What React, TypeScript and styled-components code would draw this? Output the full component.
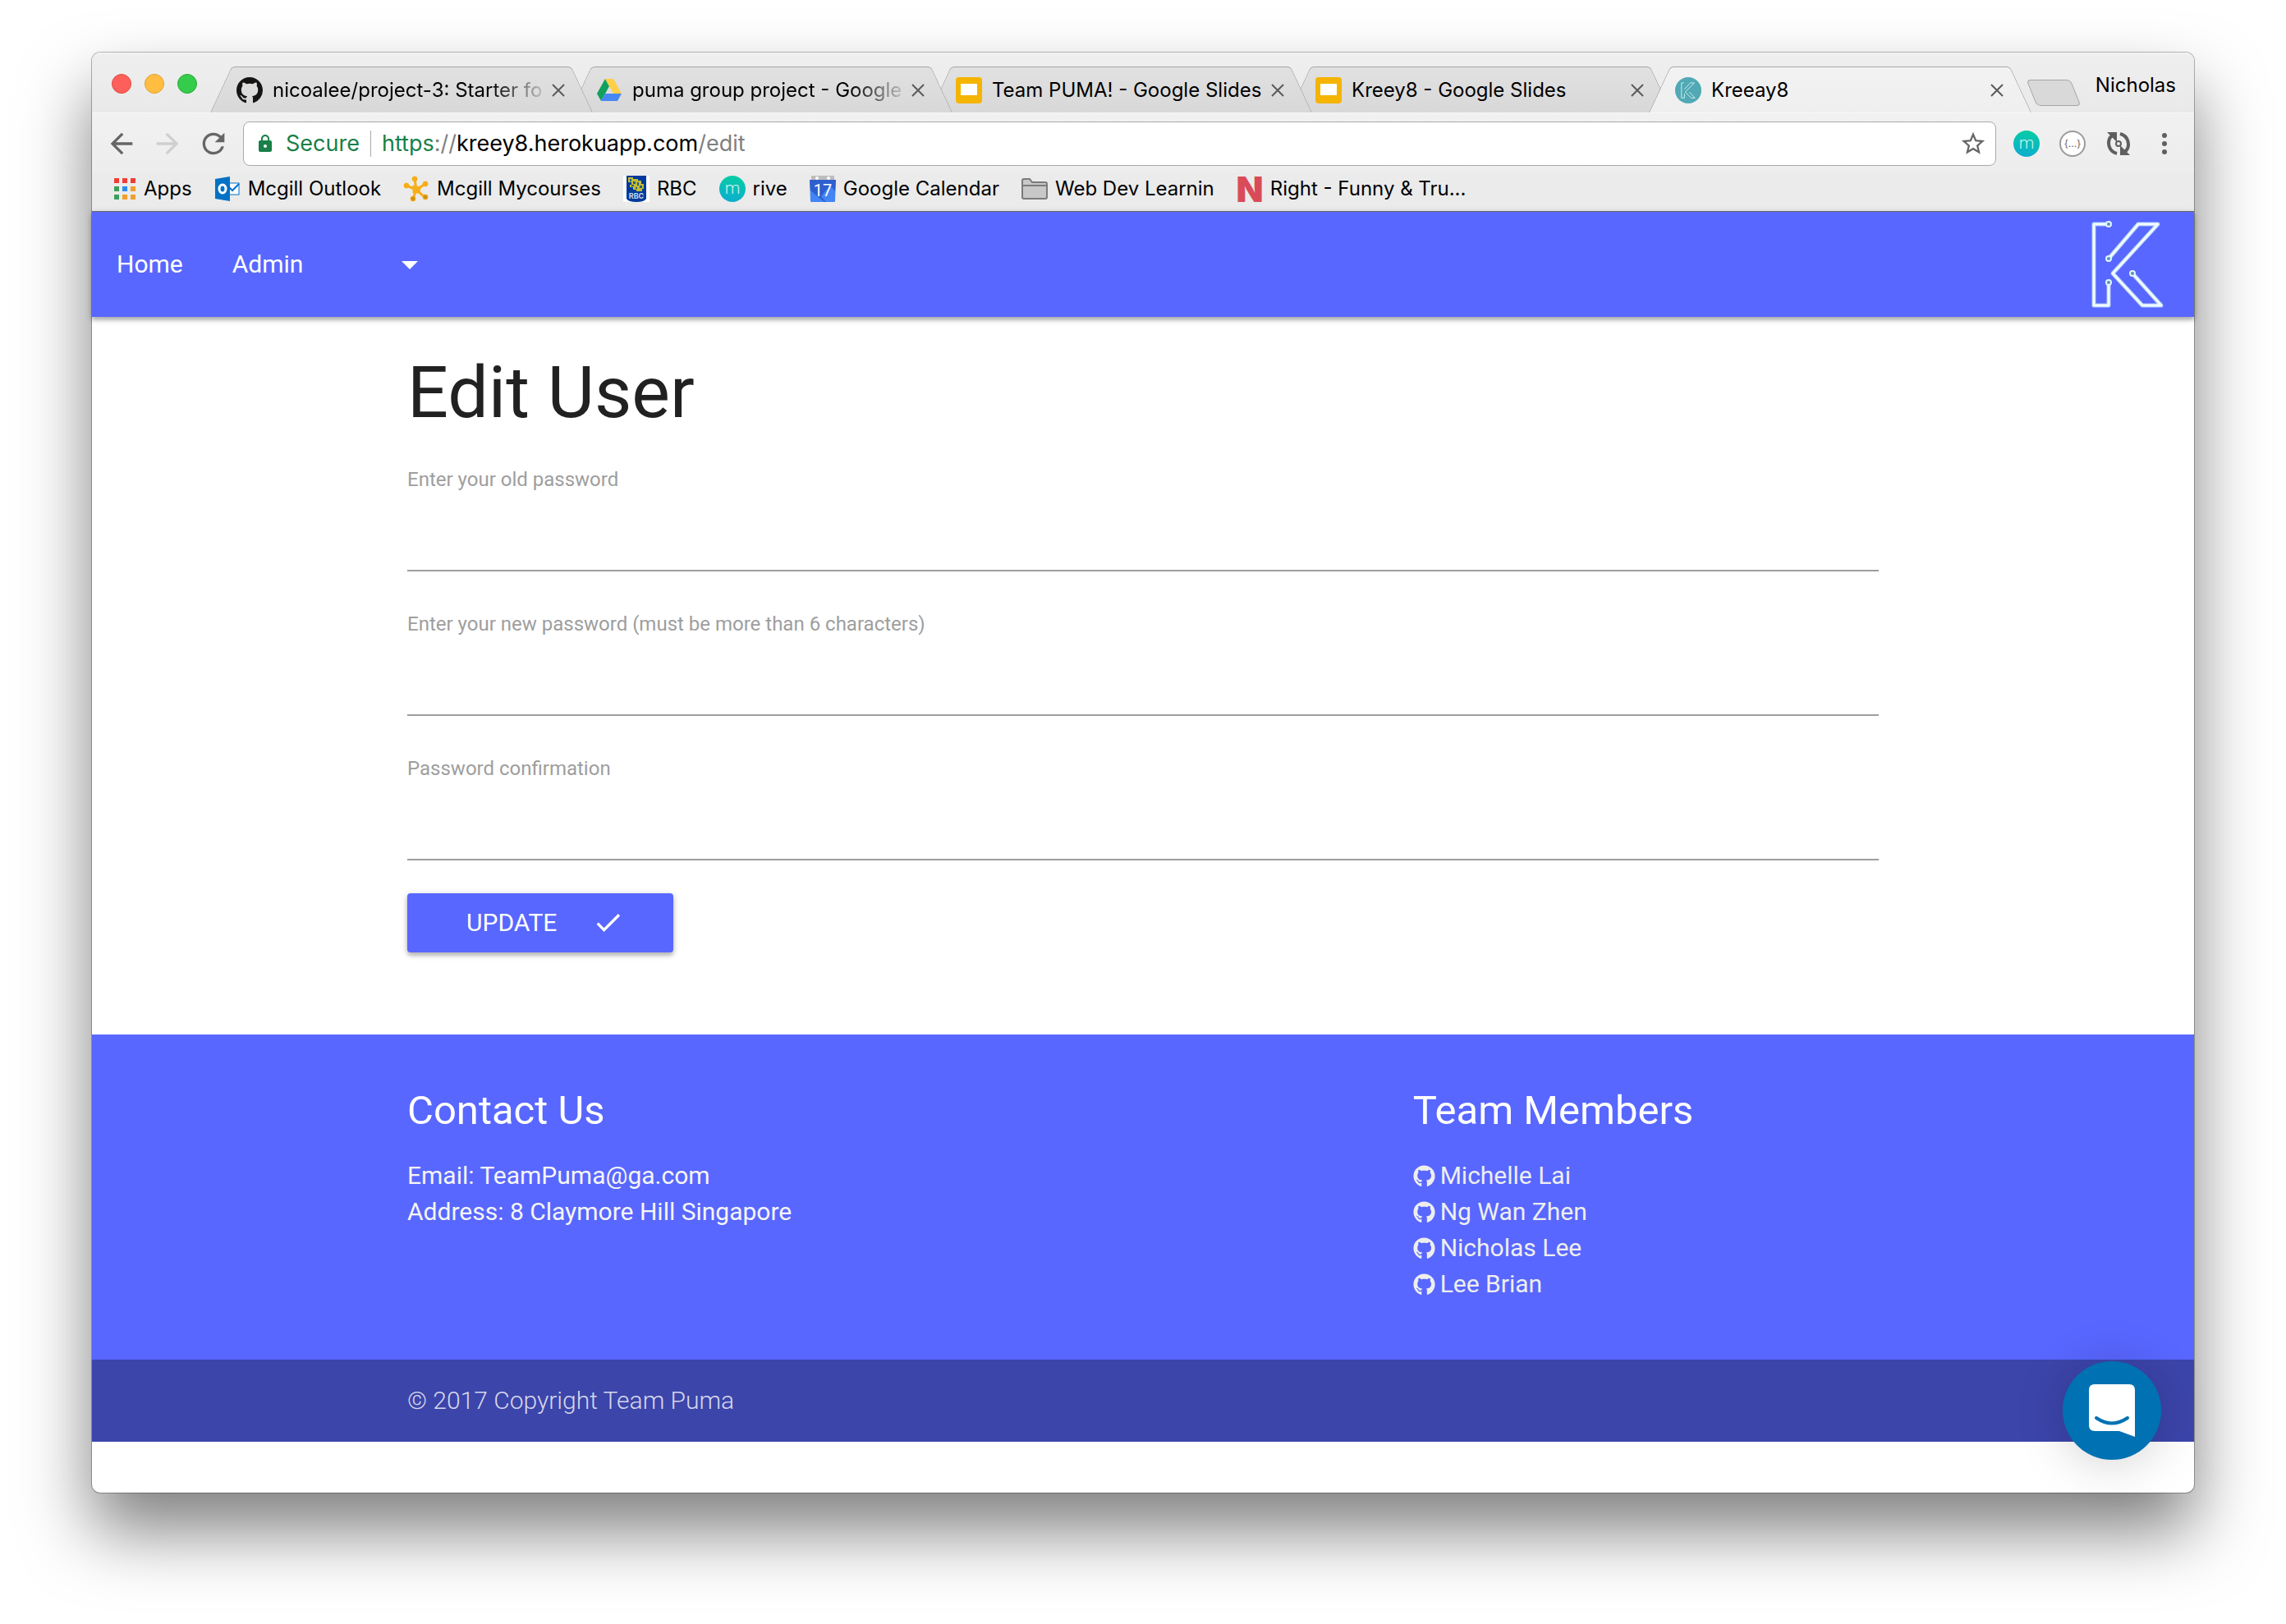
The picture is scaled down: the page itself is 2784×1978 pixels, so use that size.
import React from "react";
import styled, { createGlobalStyle, css } from "styled-components";
import { FaGithub } from "react-icons/fa";
import { MdArrowBack, MdArrowForward, MdRefresh, MdStarBorder, MdLock, MdCheck } from "react-icons/md";

const uiFont = `Inter, "Noto Sans", sans-serif`;
const blue = "#5867ff";

const GlobalStyle = createGlobalStyle`
  *, *::before, *::after { box-sizing: border-box; }
  body { margin: 0; background: #fff; font-family: Roboto, sans-serif; }
  button { font: inherit; color: inherit; background: none; border: 0; padding: 0; cursor: pointer; }
  a { color: inherit; text-decoration: none; }
  svg { display: block; flex: none; }
`;

/* ---------- window ---------- */

const Desktop = styled.div`
  min-height: 100vh;
  padding: 64px 112px 160px;
  display: flex;
`;

const Window = styled.div`
  flex: 1;
  min-width: 0;
  display: flex;
  flex-direction: column;
  border-radius: 10px;
  background: #fff;
  box-shadow: 0 0 0 1px rgba(0, 0, 0, 0.28), 0 46px 84px rgba(0, 0, 0, 0.5);
`;

const Chrome = styled.header`
  font-family: ${uiFont};
  font-size: 24px;
  color: #000;
  border-radius: 10px 10px 0 0;
  border-bottom: 1px solid #6f6f6f;
  background: #ebebeb;
  overflow: hidden;
`;

/* ---------- tab strip ---------- */

const TabStrip = styled.div`
  display: flex;
  height: 73px;
  padding: 0 22px 0 24px;
  background: linear-gradient(#efefef, #e9e9e9);
  border-top: 1px solid #f8f8f8;
`;

const Lights = styled.div`
  display: flex;
  align-items: center;
  gap: 16px;
  width: 120px;
  height: 74px;
  flex: none;
`;

const Light = styled.button<{ $fill: string; $edge: string }>`
  width: 24px;
  height: 24px;
  border-radius: 50%;
  background: ${(p) => p.$fill};
  border: 1px solid ${(p) => p.$edge};
`;

const Tabs = styled.div`
  display: flex;
  flex: 0 1 2218px;
  min-width: 0;
  align-self: flex-end;
  isolation: isolate;
`;

const tabSide = css<{ $active?: boolean }>`
  content: "";
  position: absolute;
  top: 0;
  bottom: 0;
  z-index: -1;
  border-top: 1px solid #a6a6a6;
  background: ${(p) => (p.$active ? "linear-gradient(#f2f2f2, #efefef)" : "linear-gradient(#e1e1e1, #d8d8d8)")};
`;

const Tab = styled.div<{ $active?: boolean; $order: number }>`
  position: relative;
  isolation: isolate;
  z-index: ${(p) => p.$order};
  flex: 0 1 466px;
  min-width: 0;
  height: 56px;
  padding: 2px 34px 0 32px;
  display: flex;
  align-items: center;
  gap: 12px;
  & + & { margin-left: -28px; }
  &::before {
    ${tabSide}
    left: 13px;
    width: 50%;
    border-left: 1px solid #a6a6a6;
    border-top-left-radius: 5px;
    transform: skewX(-25deg);
  }
  &::after {
    ${tabSide}
    right: 13px;
    width: 50%;
    border-right: 1px solid #a6a6a6;
    border-top-right-radius: 5px;
    transform: skewX(25deg);
  }
`;

const TabTitle = styled.span<{ $fade?: boolean }>`
  flex: 1;
  min-width: 0;
  overflow: hidden;
  white-space: nowrap;
  line-height: 32px;
  ${(p) => p.$fade && "mask-image: linear-gradient(to right, #000 calc(100% - 64px), rgba(0,0,0,0.15));"}
`;

const NewTab = styled.button`
  width: 54px;
  height: 32px;
  margin: 32px 0 0;
  flex: none;
  background: #d9d9d9;
  border: 1px solid #a6a6a6;
  border-radius: 5px;
  transform: skewX(22deg);
`;

const Profile = styled.button`
  margin-left: auto;
  line-height: 32px;
  height: 78px;
`;

/* ---------- toolbar ---------- */

const Toolbar = styled.div`
  display: flex;
  align-items: center;
  height: 74px;
  padding: 0 20px 0 16px;
  background: linear-gradient(#f1f1f1, #ededed);
  border-top: 1px solid #f8f8f8;
`;

const ToolButton = styled.button<{ $faint?: boolean }>`
  display: flex;
  align-items: center;
  justify-content: center;
  width: 40px;
  height: 40px;
  margin-right: 16px;
  color: ${(p) => (p.$faint ? "#cfcfcf" : "#666")};
`;

const Omnibox = styled.div`
  flex: 1;
  min-width: 0;
  display: flex;
  align-items: center;
  height: 54px;
  padding: 0 10px 0 14px;
  background: #fff;
  border: 1px solid #a9a9a9;
  border-radius: 8px;
  font-size: 27px;
  line-height: 36px;
`;

const Secure = styled.span`
  display: flex;
  align-items: center;
  gap: 13px;
  padding-right: 13px;
  border-right: 1px solid #a9a9a9;
  line-height: 32px;
  color: #188048;
`;

const Url = styled.div`
  flex: 1;
  padding-left: 13px;
  color: #000;
`;

const Scheme = styled.span`
  color: #188048;
`;

const Dim = styled.span`
  color: #808080;
`;

const Extensions = styled.div`
  display: flex;
  align-items: center;
  gap: 24px;
  margin-left: 21px;
`;

/* ---------- bookmarks ---------- */

const Bookmarks = styled.nav`
  display: flex;
  align-items: center;
  gap: 27px;
  height: 46px;
  padding: 0 26px 8px;
`;

const Bookmark = styled.a`
  display: flex;
  align-items: center;
  gap: 9px;
  line-height: 32px;
  white-space: nowrap;
`;

/* ---------- page ---------- */

const Page = styled.div`
  position: relative;
  flex: 1;
  font-size: 30px;
`;

const NavBar = styled.nav`
  display: flex;
  align-items: center;
  height: 128px;
  padding: 0 30px 0 0;
  color: #fff;
  background: ${blue};
  box-shadow: 0 4px 4px rgba(0, 0, 0, 0.18), 0 2px 8px rgba(0, 0, 0, 0.24);
`;

const navItem = css`
  display: flex;
  align-items: center;
  padding: 0 30px 2px;
  height: 128px;
`;

const NavLink = styled.a`
  ${navItem}
`;

const NavMenu = styled.button`
  && {
    ${navItem}
    justify-content: space-between;
    width: 286px;
  }
`;

const Caret = styled.span`
  border: 10px solid transparent;
  border-top-color: #fff;
  border-bottom: 0;
  margin-top: 4px;
`;

const Brand = styled.a`
  margin-left: auto;
`;

const Container = styled.div`
  width: 70%;
  margin: 0 auto;
`;

const Title = styled.h3`
  margin: 44px 0 40px;
  font-size: 88px;
  line-height: 96px;
  font-weight: 400;
  color: #212121;
`;

const Field = styled.div`
  display: flex;
  flex-direction: column;
  margin-bottom: 46px;
`;

const FieldLabel = styled.label`
  font-size: 24px;
  line-height: 36px;
  color: #9e9e9e;
`;

const FieldInput = styled.input`
  width: 100%;
  height: 94px;
  padding: 0;
  border: 0;
  border-bottom: 2px solid #9e9e9e;
  outline: 0;
  background: transparent;
  font: 30px Roboto, sans-serif;
`;

const Update = styled.button`
  && {
    display: flex;
    align-items: center;
    justify-content: space-between;
    width: 324px;
    height: 72px;
    padding: 0 60px 2px 72px;
    margin: -6px 0 100px;
    color: #fff;
    background: ${blue};
    border-radius: 4px;
    box-shadow: 0 4px 4px rgba(0, 0, 0, 0.16), 0 2px 8px rgba(0, 0, 0, 0.22);
  }
`;

const Footer = styled.footer`
  color: #fff;
  background: ${blue};
`;

const FooterColumns = styled(Container)`
  display: grid;
  grid-template-columns: 2fr 1fr;
  column-gap: 90px;
  padding: 66px 0 70px;
`;

const FooterTitle = styled.h5`
  margin: 0 0 30px;
  font-size: 49px;
  line-height: 54px;
  font-weight: 400;
`;

const FooterText = styled.p`
  margin: 0;
  line-height: 44px;
  color: #f5f5f5;
`;

const Members = styled.ul`
  margin: 0;
  padding: 0;
  list-style: none;
`;

const Member = styled.a`
  display: flex;
  align-items: center;
  gap: 6px;
  line-height: 44px;
  color: #eee;
`;

const Copyright = styled.div`
  padding: 28px 0;
  line-height: 44px;
  font-weight: 300;
  color: rgba(255, 255, 255, 0.8);
  background: #3c45aa;
`;

const Messenger = styled.button`
  && {
    position: absolute;
    right: 40px;
    bottom: 40px;
    display: flex;
    align-items: center;
    justify-content: center;
    width: 120px;
    height: 120px;
    border-radius: 50%;
    background: #0071b2;
    box-shadow: 0 4px 60px rgba(0, 0, 0, 0.18);
  }
`;

/* ---------- drawings ---------- */

const GithubMark = () => (
  <svg width="32" height="32" viewBox="0 0 16 16" fill="#161514">
    <path d="M8 0C3.58 0 0 3.58 0 8c0 3.54 2.29 6.53 5.47 7.59.4.07.55-.17.55-.38 0-.19-.01-.82-.01-1.49-2.01.37-2.53-.49-2.69-.94-.09-.23-.48-.94-.82-1.13-.28-.15-.68-.52-.01-.53.63-.01 1.08.58 1.23.82.72 1.21 1.87.87 2.33.66.07-.52.28-.87.51-1.07-1.78-.2-3.64-.89-3.64-3.95 0-.87.31-1.59.82-2.15-.08-.2-.36-1.02.08-2.12 0 0 .67-.21 2.2.82.64-.18 1.32-.27 2-.27s1.36.09 2 .27c1.53-1.04 2.2-.82 2.2-.82.44 1.1.16 1.92.08 2.12.51.56.82 1.27.82 2.15 0 3.07-1.87 3.75-3.65 3.95.29.25.54.73.54 1.48 0 1.07-.01 1.93-.01 2.2 0 .21.15.46.55.38A8.01 8.01 0 0 0 16 8c0-4.42-3.58-8-8-8z" />
  </svg>
);

const DriveIcon = () => (
  <svg width="32" height="32" viewBox="0 0 32 32">
    <path d="M11 2 L1 20 L6 29 L16 11 Z" fill="#11a05e" />
    <path d="M11 2 H21 L31 20 H21 Z" fill="#ffcf48" />
    <path d="M11 20 H31 L26 29 H6 Z" fill="#4688f4" />
  </svg>
);

const SlidesIcon = () => (
  <svg width="32" height="32" viewBox="0 0 32 32">
    <rect width="32" height="32" rx="4" fill="#f5b400" />
    <rect x="6" y="8" width="20" height="14" fill="#fff" />
  </svg>
);

const circuit = "M19 5H4V104H22V76M22 47L58 5H82L27 65L63 104H86L51 65";
const nodes = [[22, 5], [22, 47], [22, 76], [51, 65]];

const KFavicon = () => (
  <svg width="32" height="32" viewBox="0 0 32 32">
    <circle cx="16" cy="16" r="16" fill="#50a9b4" />
    <g transform="translate(7 6) scale(0.2 0.186)" fill="none" stroke="#cfeef0" strokeWidth="5">
      <path d={circuit} />
    </g>
  </svg>
);

const KLogo = () => (
  <svg width="96" height="108" viewBox="0 0 96 108" fill="none">
    <path d={circuit} stroke="#a9c8ff" strokeWidth="5" strokeLinejoin="round" />
    <path d={circuit} stroke="#f2fbff" strokeWidth="3" strokeLinejoin="round" />
    {nodes.map(([x, y]) => (
      <circle key={`${x}-${y}`} cx={x} cy={y} r="3" fill="#4f95b8" stroke="#e4f5ff" strokeWidth="2" />
    ))}
  </svg>
);

const CloseIcon = () => (
  <svg width="16" height="16" viewBox="0 0 16 16" stroke="#5a5a5a" strokeWidth="2">
    <path d="M1 1L15 15M15 1L1 15" />
  </svg>
);

const AppsIcon = () => {
  const colors = ["#f23c36", "#f23c36", "#f23c36", "#3a9f5c", "#2a8cf5", "#f0a02a", "#3a9f5c", "#f0a02a", "#f0a02a"];
  return (
    <svg width="28" height="28" viewBox="0 0 28 28">
      {colors.map((c, i) => (
        <rect key={i} x={1 + (i % 3) * 10} y={1 + Math.floor(i / 3) * 10} width="6" height="6" fill={c} />
      ))}
    </svg>
  );
};

const OutlookIcon = () => (
  <svg width="32" height="32" viewBox="0 0 32 32">
    <rect x="17" y="9" width="13" height="14" fill="#fff" stroke="#0072c6" strokeWidth="1" />
    <path d="M17 13L22 18L30 10" fill="none" stroke="#0072c6" strokeWidth="2" />
    <path d="M1 4L19 1V31L1 28Z" fill="#0072c6" />
    <ellipse cx="10" cy="16" rx="4" ry="5" fill="none" stroke="#fff" strokeWidth="3" />
  </svg>
);

const CoursesIcon = () => (
  <svg width="32" height="32" viewBox="0 0 32 32" fill="#f8ae18" stroke="#f8ae18">
    <path d="M16 17L14 4M16 17L4 12M16 17L27 10M16 17L12 28M16 17L27 27" strokeWidth="3" />
    <path d="M12 12L21 14L20 21H12Z" />
    <circle cx="14" cy="4" r="3" />
    <circle cx="4" cy="12" r="3" />
    <circle cx="27" cy="10" r="3" />
    <circle cx="12" cy="28" r="3" fill="#d0930f" />
    <circle cx="27" cy="26" r="3" fill="#d0930f" />
  </svg>
);

const BankIcon = () => (
  <svg width="32" height="32" viewBox="0 0 32 32">
    <rect width="32" height="32" fill="#fff" />
    <path d="M4 0H28V28Q26 32 16 32Q6 32 4 28Z" fill="#003a9b" />
    <path d="M6 2h6v2h6v2h4v4h3v6h-2v3h-7v-2h-4v-3h-4v-3h2V8H6z" fill="#c2bd30" />
    <path d="M8 4h2v3H8zM12 7h3v3h-3zM17 8h2v4h-2zM10 11h3v2h-3zM20 12h3v3h-3zM15 14h2v2h-2z" fill="#2a5c84" />
    <text x="16" y="28" fontSize="9" fontWeight="700" textAnchor="middle" fill="#c9d6ec">RBC</text>
  </svg>
);

const MBadge = ({ id }: { id: string }) => (
  <svg width="32" height="32" viewBox="0 0 32 32">
    <linearGradient id={id} x1="0.6" y1="0" x2="0.4" y2="1">
      <stop offset="0" stopColor="#07cda5" />
      <stop offset="1" stopColor="#0cadcf" />
    </linearGradient>
    <circle cx="16" cy="16" r="16" fill={`url(#${id})`} />
    <text x="16" y="22" fontFamily="Roboto" fontSize="21" fontWeight="300" textAnchor="middle" fill="#c9f3f0">m</text>
  </svg>
);

const CalendarIcon = () => (
  <svg width="32" height="32" viewBox="0 0 32 32">
    <path d="M2 0H30V8H2Z" fill="#bdbdbd" />
    <circle cx="9" cy="3" r="2" fill="#fff" />
    <circle cx="23" cy="3" r="2" fill="#fff" />
    <path d="M0 5H32L31 31Q31 32 30 32H2Q1 32 1 31Z" fill="#4285f4" />
    <path d="M0 5H32L31 19L25 12L14 25L20 32H18L8 24L1 18Z" fill="#2f5fcf" />
    <text x="16" y="25" fontFamily="Roboto" fontSize="20" fontWeight="400" textAnchor="middle" fill="#fff">17</text>
  </svg>
);

const FolderIcon = () => (
  <svg width="32" height="26" viewBox="0 0 32 26" fill="#c8c8c8" stroke="#7b7b7b" strokeWidth="2">
    <path d="M1 23V3Q1 1 3 1H10L13 5H29Q31 5 31 7V23Q31 25 29 25H3Q1 25 1 23Z" />
    <path d="M1 9H31" />
  </svg>
);

const NLogo = () => (
  <svg width="32" height="32" viewBox="0 0 32 32" overflow="visible">
    <text x="16" y="32" fontSize="43" fontWeight="900" textAnchor="middle" fill="#d94b59">N</text>
  </svg>
);

const BracesIcon = () => (
  <svg width="32" height="32" viewBox="0 0 32 32">
    <circle cx="16" cy="16" r="15" fill="#fff" stroke="#9b9b9b" strokeWidth="2" />
    <text x="16" y="20" fontSize="12" textAnchor="middle" fill="#666">{"{...}"}</text>
  </svg>
);

const SyncIcon = () => (
  <svg width="32" height="32" viewBox="0 0 32 32" fill="none" stroke="#5f5f5f">
    <path d="M14 28A13 13 0 0 1 8 6" strokeWidth="4" />
    <path d="M18 4A13 13 0 0 1 24 26" strokeWidth="4" />
    <path d="M2 2H14V14Z" fill="#5f5f5f" stroke="none" />
    <path d="M30 30H18V18Z" fill="#5f5f5f" stroke="none" />
    <circle cx="16" cy="16" r="3" strokeWidth="2" />
  </svg>
);

const MenuDots = () => (
  <svg width="32" height="32" viewBox="0 0 32 32" fill="#5f5f5f">
    <circle cx="16" cy="6" r="3" />
    <circle cx="16" cy="16" r="3" />
    <circle cx="16" cy="26" r="3" />
  </svg>
);

const ChatIcon = () => (
  <svg width="56" height="64" viewBox="0 0 56 64">
    <path d="M7 0H49Q56 0 56 7V64L37 57H7Q0 57 0 50V7Q0 0 7 0Z" fill="#fff" />
    <path d="M9 41Q28 54 47 41" fill="none" stroke="#0071b2" strokeWidth="4" strokeLinecap="round" />
  </svg>
);

/* ---------- data ---------- */

const tabs = [
  { title: "nicoalee/project-3: Starter fo", icon: <GithubMark />, fade: true },
  { title: "puma group project - Google", icon: <DriveIcon />, fade: true },
  { title: "Team PUMA! - Google Slides", icon: <SlidesIcon /> },
  { title: "Kreey8 - Google Slides", icon: <SlidesIcon /> },
  { title: "Kreeay8", icon: <KFavicon />, active: true },
];

const bookmarks = [
  { label: "Apps", icon: <AppsIcon /> },
  { label: "Mcgill Outlook", icon: <OutlookIcon /> },
  { label: "Mcgill Mycourses", icon: <CoursesIcon /> },
  { label: "RBC", icon: <BankIcon /> },
  { label: "rive", icon: <MBadge id="rive" /> },
  { label: "Google Calendar", icon: <CalendarIcon /> },
  { label: "Web Dev Learnin", icon: <FolderIcon /> },
  { label: "Right - Funny & Tru...", icon: <NLogo /> },
];

const fields = [
  { id: "old-password", label: "Enter your old password" },
  { id: "new-password", label: "Enter your new password (must be more than 6 characters)" },
  { id: "confirm-password", label: "Password confirmation" },
];

const members = ["Michelle Lai", "Ng Wan Zhen", "Nicholas Lee", "Lee Brian"];

export default function App() {
  return (
    <Desktop>
      <GlobalStyle />
      <Window>
        <Chrome>
          <TabStrip>
            <Lights>
              <Light aria-label="Close window" $fill="#ff5f5a" $edge="#e2463f" />
              <Light aria-label="Minimise window" $fill="#ffbe41" $edge="#e0a033" />
              <Light aria-label="Zoom window" $fill="#35cc4b" $edge="#27aa35" />
            </Lights>
            <Tabs>
              {tabs.map((tab, i) => (
                <Tab key={tab.title} $active={tab.active} $order={tab.active ? 10 : 5 - i}>
                  {tab.icon}
                  <TabTitle $fade={tab.fade}>{tab.title}</TabTitle>
                  <button aria-label="Close tab"><CloseIcon /></button>
                </Tab>
              ))}
            </Tabs>
            <NewTab aria-label="New tab" />
            <Profile>Nicholas</Profile>
          </TabStrip>
          <Toolbar>
            <ToolButton aria-label="Back"><MdArrowBack size={40} /></ToolButton>
            <ToolButton aria-label="Forward" $faint><MdArrowForward size={40} /></ToolButton>
            <ToolButton aria-label="Reload"><MdRefresh size={40} /></ToolButton>
            <Omnibox>
              <Secure><MdLock size={24} />Secure</Secure>
              <Url role="textbox" aria-label="Address">
                <Scheme>https</Scheme><Dim>://</Dim>kreey8.herokuapp.com<Dim>/edit</Dim>
              </Url>
              <button aria-label="Bookmark this page"><MdStarBorder size={34} color="#666" /></button>
            </Omnibox>
            <Extensions>
              <button aria-label="Momentum"><MBadge id="extension" /></button>
              <button aria-label="JSON viewer"><BracesIcon /></button>
              <button aria-label="Sync"><SyncIcon /></button>
              <button aria-label="Menu"><MenuDots /></button>
            </Extensions>
          </Toolbar>
          <Bookmarks>
            {bookmarks.map((b) => (
              <Bookmark key={b.label} href="#">{b.icon}{b.label}</Bookmark>
            ))}
          </Bookmarks>
        </Chrome>
        <Page>
          <NavBar>
            <NavLink href="#">Home</NavLink>
            <NavMenu>Admin<Caret /></NavMenu>
            <Brand href="#" aria-label="Kreey8"><KLogo /></Brand>
          </NavBar>
          <Container as="main">
            <Title>Edit User</Title>
            <form>
              {fields.map((f) => (
                <Field key={f.id}>
                  <FieldLabel htmlFor={f.id}>{f.label}</FieldLabel>
                  <FieldInput id={f.id} type="password" />
                </Field>
              ))}
              <Update type="button">UPDATE<MdCheck size={39} /></Update>
            </form>
          </Container>
          <Footer>
            <FooterColumns>
              <section>
                <FooterTitle>Contact Us</FooterTitle>
                <FooterText>Email: TeamPuma@ga.com</FooterText>
                <FooterText>Address: 8 Claymore Hill Singapore</FooterText>
              </section>
              <section>
                <FooterTitle>Team Members</FooterTitle>
                <Members>
                  {members.map((name) => (
                    <li key={name}><Member href="#"><FaGithub size={27} />{name}</Member></li>
                  ))}
                </Members>
              </section>
            </FooterColumns>
            <Copyright>
              <Container>© 2017 Copyright Team Puma</Container>
            </Copyright>
          </Footer>
          <Messenger aria-label="Open chat"><ChatIcon /></Messenger>
        </Page>
      </Window>
    </Desktop>
  );
}
